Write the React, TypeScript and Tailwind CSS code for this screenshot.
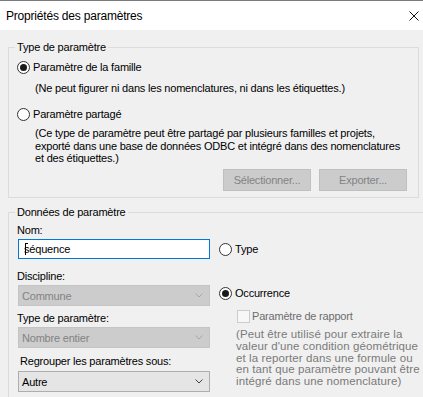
import type { ReactNode } from 'react';

function Radio({ checked }: { checked?: boolean }) {
  return (
    <span className="w-[13px] h-[13px] rounded-full border border-[#333333] bg-white flex items-center justify-center shrink-0">
      {checked && <span className="w-[7px] h-[7px] rounded-full bg-[#1a1a1a]" />}
    </span>
  );
}

function Chevron({ disabled }: { disabled?: boolean }) {
  return (
    <svg width="8" height="5" viewBox="0 0 8 5" className="shrink-0">
      <path d="M0.5 0.5 L4 4 L7.5 0.5" fill="none" stroke={disabled ? '#a8a8a8' : '#404040'} strokeWidth="1" />
    </svg>
  );
}

function Select({ value, disabled }: { value: string; disabled?: boolean }) {
  return (
    <div
      className={`ml-[1px] w-[192px] h-[21px] flex items-center justify-between pl-[3px] pr-[6px] border ${
        disabled ? 'bg-[#cccccc] border-[#c4c4c4] text-[#838383]' : 'bg-[#e5e5e5] border-[#adadad] text-black'
      }`}
    >
      <span>{value}</span>
      <Chevron disabled={disabled} />
    </div>
  );
}

function Label({ children, className = '' }: { children: ReactNode; className?: string }) {
  return <div className={`h-[14px] leading-[14px] ${className}`}>{children}</div>;
}

export default function App() {
  return (
    <div className="w-[423px] h-[397px] overflow-hidden bg-[#f0f0f0] text-black text-[11px] leading-[14px] tracking-[-0.2px] font-['Liberation_Sans',Arial,sans-serif]">
      {/* Title bar */}
      <div className="h-[30px] bg-white border-t border-[#7a7a7a] flex items-center justify-between pl-[6px] pr-[4px]">
        <span className="text-[12px]">Propriétés des paramètres</span>
        <svg width="10" height="10" viewBox="0 0 10 10">
          <path d="M0.5 0.5 L9.5 9.5 M9.5 0.5 L0.5 9.5" stroke="#111" strokeWidth="1" />
        </svg>
      </div>

      <div className="pl-[8px] pr-[4px] pt-[10px]">
        {/* Type de paramètre */}
        <fieldset className="border border-[#dcdcdc] pl-[8px] pr-[11px] pb-[6px]">
          <legend className="px-[2px] -ml-[2px] leading-[14px]">Type de paramètre</legend>

          <div className="mt-[6px] h-[14px] flex items-center gap-[3px]">
            <Radio checked />
            <span>Paramètre de la famille</span>
          </div>
          <div className="mt-[7px] pl-[18px] whitespace-nowrap">
            (Ne peut figurer ni dans les nomenclatures, ni dans les étiquettes.)
          </div>

          <div className="mt-[12px] h-[14px] flex items-center gap-[3px]">
            <Radio />
            <span>Paramètre partagé</span>
          </div>
          <div className="mt-[6px] pl-[18px] leading-[12.5px] whitespace-nowrap">
            (Ce type de paramètre peut être partagé par plusieurs familles et projets,
            <br />
            exporté dans une base de données ODBC et intégré dans des nomenclatures
            <br />
            et des étiquettes.)
          </div>

          <div className="mt-[4.5px] flex justify-end gap-[8px]">
            <div className="w-[88px] h-[22px] bg-[#cccccc] border border-[#bfbfbf] text-[#838383] flex items-center justify-center">
              Sélectionner...
            </div>
            <div className="w-[88px] h-[22px] bg-[#cccccc] border border-[#bfbfbf] text-[#838383] flex items-center justify-center">
              Exporter...
            </div>
          </div>
        </fieldset>

        {/* Données de paramètre */}
        <fieldset className="mt-[7px] border border-[#dcdcdc] pl-[8px] pr-[11px] pb-[10px]">
          <legend className="px-[2px] -ml-[2px] leading-[14px]">Données de paramètre</legend>

          <div className="flex gap-[9px]">
            <div className="w-[193px] shrink-0 flex flex-col">
              <Label className="mt-[4px]">Nom:</Label>
              <div className="relative mt-[2px] ml-[1px] w-[192px] h-[20px] bg-white border border-[#0078d7] flex items-center pl-[5px]">
                <span>séquence</span>
                <span className="absolute left-[6px] top-[3px] w-[1px] h-[12px] bg-black" />
                <span className="absolute left-[6px] top-[3px] w-[3px] h-[1px] bg-black" />
              </div>

              <Label className="mt-[10px]">Discipline:</Label>
              <div className="mt-[2px]">
                <Select value="Commune" disabled />
              </div>

              <Label className="mt-[5px]">Type de paramètre:</Label>
              <div className="mt-[2px]">
                <Select value="Nombre entier" disabled />
              </div>

              <Label className="mt-[6px] pl-[3px]">Regrouper les paramètres sous:</Label>
              <div className="mt-[3px]">
                <Select value="Autre" />
              </div>
            </div>

            <div className="flex flex-col">
              <div className="mt-[23px] h-[14px] flex items-center gap-[3px]">
                <Radio />
                <span>Type</span>
              </div>
              <div className="mt-[30px] h-[14px] flex items-center gap-[3px]">
                <Radio checked />
                <span>Occurrence</span>
              </div>
              <div className="mt-[9px] h-[14px] pl-[18px] flex items-center gap-[2px] text-[#6d6d6d]">
                <span className="w-[13px] h-[13px] bg-[#f7f7f7] border border-[#cccccc] shrink-0" />
                <span>Paramètre de rapport</span>
              </div>
              <div className="mt-[6px] pl-[17px] text-[11.5px] leading-[11.75px] tracking-[0.1px] whitespace-nowrap text-[#7a7a7a]">
                (Peut être utilisé pour extraire la
                <br />
                valeur d'une condition géométrique
                <br />
                et la reporter dans une formule ou
                <br />
                en tant que paramètre pouvant être
                <br />
                intégré dans une nomenclature)
              </div>
            </div>
          </div>
        </fieldset>
      </div>
    </div>
  );
}
